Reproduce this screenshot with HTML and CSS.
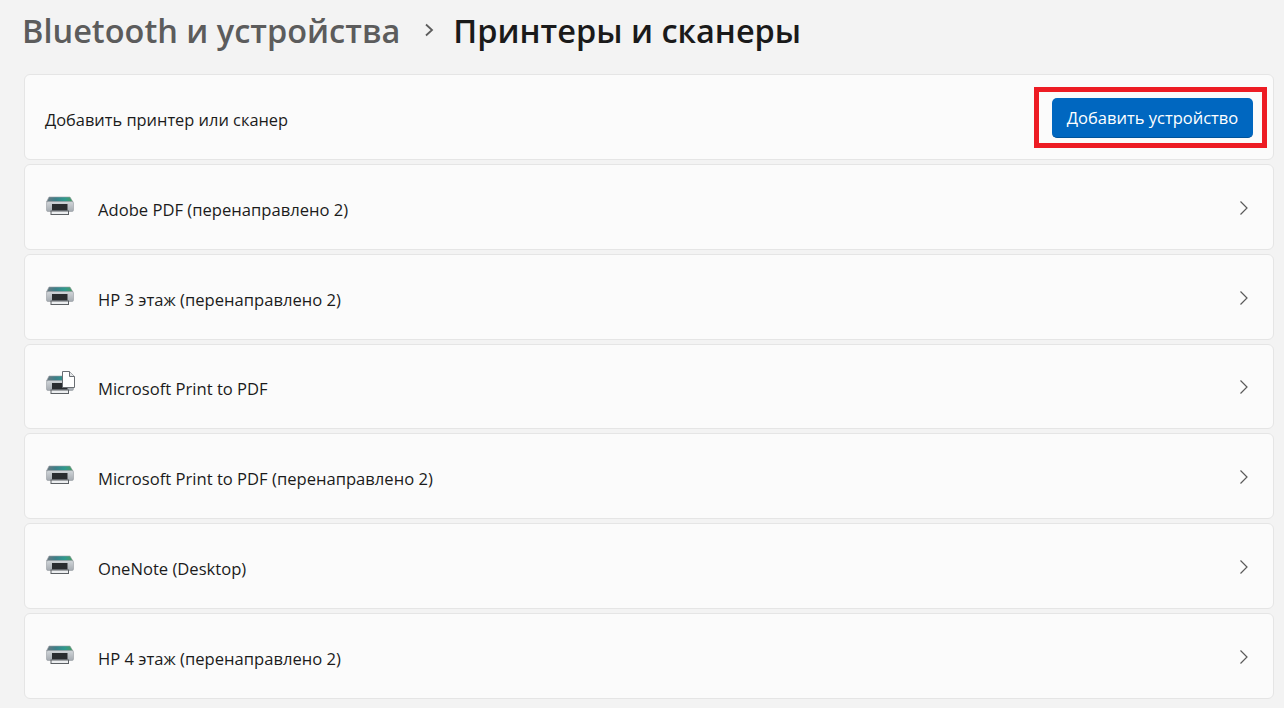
FILE: index.html
```html
<!DOCTYPE html>
<html>
    <head>
        <title>Принтеры и сканеры</title>
        <link rel="stylesheet" href="styles.css">
    </head>
    <body>
        <svg class="defs" width="0" height="0">
            <defs>
                <linearGradient id="body-fill" x1="0" y1="0" x2="0" y2="1">
                    <stop offset="0" stop-color="#d2d6da"/>
                    <stop offset="1" stop-color="#a4aab0"/>
                </linearGradient>
                <linearGradient id="top-fill" x1="0" y1="0" x2="1" y2="0">
                    <stop offset="0" stop-color="#6d7780"/>
                    <stop offset="0.35" stop-color="#3c7f88"/>
                    <stop offset="0.7" stop-color="#2f9a8e"/>
                    <stop offset="1" stop-color="#4d9a5f"/>
                </linearGradient>
                <g id="printer">
                    <path d="M3 1h21l3 5H.5z" fill="url(#top-fill)" stroke="#9aa0a6" stroke-width="0.6"/>
                    <rect x="0.5" y="5.5" width="27" height="10" rx="1.5" fill="url(#body-fill)" stroke="#8c9298" stroke-width="0.5"/>
                    <rect x="6" y="8" width="15.5" height="6.5" fill="#2a2d30"/>
                    <rect x="5" y="15" width="17.5" height="3.5" fill="#eceef0" stroke="#5c6064" stroke-width="1"/>
                </g>
                <path id="chevron" d="M1.5 1.5 8 8l-6.5 6.5" fill="none" stroke="#5a5a5a" stroke-width="1.2"/>
            </defs>
        </svg>
        <h1 class="crumbs">
            <span class="parent">Bluetooth и устройства</span>
            <svg class="crumb-arrow" width="12" height="14" viewBox="0 0 12 14"><path d="M3 1.5 9 7l-6 5.5" fill="none" stroke="#5c5c5c" stroke-width="1.8"/></svg>
            <span class="current">Принтеры и сканеры</span>
        </h1>
        <div class="list">
            <div class="card add-card">
                <span class="label add-label">Добавить принтер или сканер</span>
                <div class="highlight">
                    <button class="add-btn">Добавить устройство</button>
                </div>
            </div>
            <div class="card">
                <svg class="icon" width="30" height="20" viewBox="0 0 30 20"><use href="#printer"/></svg>
                <span class="label">Adobe PDF (перенаправлено 2)</span>
                <svg class="arrow" width="10" height="16" viewBox="0 0 10 16"><use href="#chevron"/></svg>
            </div>
            <div class="card">
                <svg class="icon" width="30" height="20" viewBox="0 0 30 20"><use href="#printer"/></svg>
                <span class="label">HP 3 этаж (перенаправлено 2)</span>
                <svg class="arrow" width="10" height="16" viewBox="0 0 10 16"><use href="#chevron"/></svg>
            </div>
            <div class="card">
                <svg class="icon icon-doc" width="30" height="24" viewBox="0 0 30 24">
                    <g transform="translate(0 4)"><use href="#printer"/></g>
                    <path d="M16.5 .5h7l5 5v11h-12z" fill="#fff" stroke="#6a6e73" stroke-width="1"/>
                    <path d="M23.5 .5v5h5" fill="#e3e5e7" stroke="#6a6e73" stroke-width="1"/>
                </svg>
                <span class="label">Microsoft Print to PDF</span>
                <svg class="arrow" width="10" height="16" viewBox="0 0 10 16"><use href="#chevron"/></svg>
            </div>
            <div class="card">
                <svg class="icon" width="30" height="20" viewBox="0 0 30 20"><use href="#printer"/></svg>
                <span class="label">Microsoft Print to PDF (перенаправлено 2)</span>
                <svg class="arrow" width="10" height="16" viewBox="0 0 10 16"><use href="#chevron"/></svg>
            </div>
            <div class="card">
                <svg class="icon" width="30" height="20" viewBox="0 0 30 20"><use href="#printer"/></svg>
                <span class="label">OneNote (Desktop)</span>
                <svg class="arrow" width="10" height="16" viewBox="0 0 10 16"><use href="#chevron"/></svg>
            </div>
            <div class="card">
                <svg class="icon" width="30" height="20" viewBox="0 0 30 20"><use href="#printer"/></svg>
                <span class="label">HP 4 этаж (перенаправлено 2)</span>
                <svg class="arrow" width="10" height="16" viewBox="0 0 10 16"><use href="#chevron"/></svg>
            </div>
        </div>
    </body>
</html>
```

FILE: styles.css
```css
html, body {
    height: 100%;
}
body {
    margin: 0;
    padding: 0 10px 0 24px;
    background: #f3f3f3;
    font-family: "Open Sans", "Noto Sans", sans-serif;
    color: #1b1b1b;
    overflow: hidden;
    box-sizing: border-box;
}
.defs {
    position: absolute;
}
.crumbs {
    display: flex;
    align-items: center;
    height: 60.3px;
    margin: 0 0 14px -2px;
    font-size: 32.5px;
    font-weight: 600;
    white-space: nowrap;
}
.parent {
    color: #5c5c5c;
}
.crumb-arrow {
    margin: 0 18px 0 23px;
}
.current {
    color: #1a1a1a;
}
.list {
    display: flex;
    flex-direction: column;
    gap: 4px;
}
.card {
    display: flex;
    align-items: center;
    height: 85.75px;
    padding: 2px 24px 0 21px;
    background: #fbfbfb;
    border: 1px solid #e5e5e5;
    border-radius: 6px;
    box-sizing: border-box;
}
.add-card {
    justify-content: space-between;
    padding: 2px 6px 0 20px;
}
.label {
    font-size: 16.6px;
    flex: 1;
    margin-top: 3px;
}
.add-label {
    font-size: 16.4px;
}
.icon {
    margin-right: 22px;
    margin-bottom: 4px;
}
.icon-doc {
    margin-bottom: 8px;
}
.highlight {
    margin-bottom: 2px;
    padding: 6px 9px 5px 13px;
    border: 5px solid #ed1c24;
}
.add-btn {
    display: block;
    width: 201px;
    height: 40px;
    padding-top: 2px;
    background: #0067c0;
    border: 0;
    border-bottom: 1px solid #00539a;
    border-radius: 5px;
    color: #fff;
    font-family: inherit;
    font-size: 16.5px;
}
```
